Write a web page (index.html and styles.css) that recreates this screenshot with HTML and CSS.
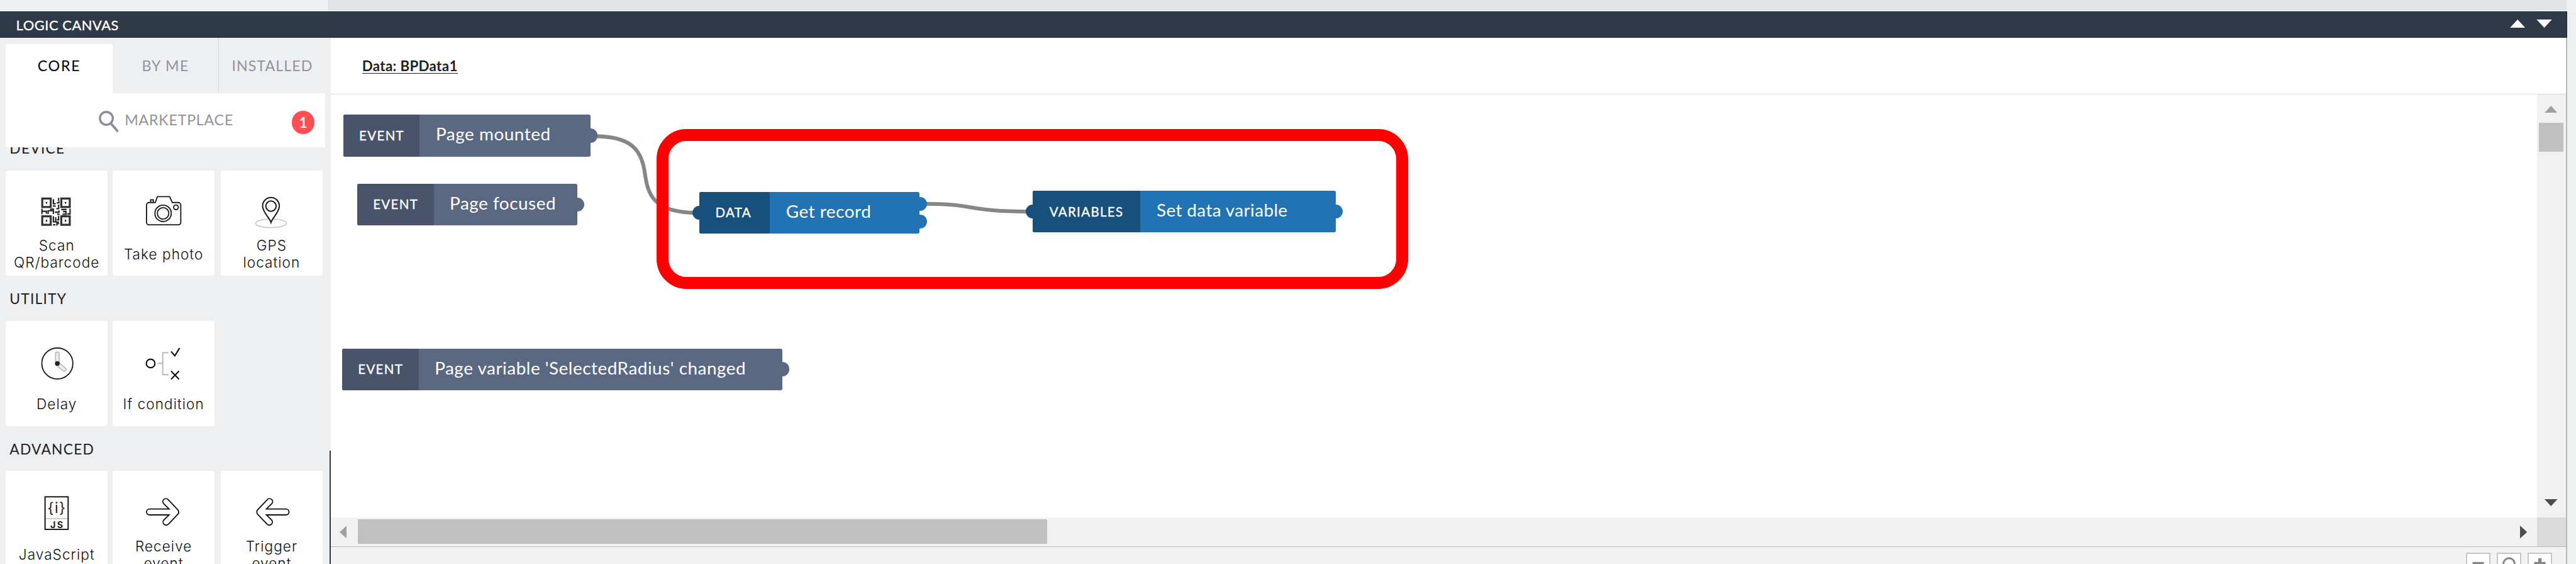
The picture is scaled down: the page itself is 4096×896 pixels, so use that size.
FILE: index.html
```
<!DOCTYPE html>
<html lang="en">
<head>
<meta charset="utf-8">
<title>Logic canvas</title>
<link rel="stylesheet" href="styles.css">
</head>
<body>
<div class="topstrip"><div class="topstrip-left"></div><div class="topstrip-main"></div></div>
<div class="workspace">
  <header class="titlebar">
    <span class="titlebar-name">LOGIC CANVAS</span>
    <svg class="titlebar-arrows" viewBox="0 0 74 15"><path d="M13.3 0 26.6 14.5H0zM47 0h27L60.5 14.5z" fill="#fff"/></svg>
  </header>
  <div class="panes">
    <aside class="sidebar">
      <nav class="tabs">
        <div class="tab tab-active">CORE</div>
        <div class="tab tab-byme">BY ME</div>
        <div class="tab tab-installed">INSTALLED</div>
      </nav>
      <div class="market">
        <svg class="market-icon" viewBox="0 0 34 40" fill="none" stroke="#8a8f96"><circle cx="13" cy="15" r="11" stroke-width="3.6"/><path d="M20.5 23.5 32 36.500" stroke-width="4.2" stroke-linecap="round"/></svg>
        <span class="market-label">MARKETPLACE</span>
        <span class="badge">1</span>
      </div>
      <div class="library">
        <h2 class="group">DEVICE</h2>
        <div class="cards">
          <div class="card">
            <svg class="icon" viewBox="0 0 174 113" fill="none" stroke="#333">
              <g stroke-width="3.4"><path d="M62.500 47.700h14.500v14.500H62.500zM95 47.700h14.500v14.500H95zM62.500 78h14.500v14.500H62.500zM95 78h14.500v14.500H95z"/></g>
              <g fill="#222" stroke="none"><path d="M68.500 53.500h2.500v3h-2.500zM101 53.500h2.500v3H101zM68.500 84h2.500v3h-2.500zM101 84h2.500v3H101z"/></g>
              <path stroke-width="2.300" stroke="#222" d="M81.500 49v7.500h4M90.500 46.500v5M87 55h4v-3M80.500 60.500h5M90.500 58v7h-4M62 65v9.500M62 69.500h7.500v4M72.500 74v-5.500h9V74M76 66h7M84 71h7v-3M88 74.500h4M95 66.500h9M98 70h5v4.500h-6M110 65v9h-5M81.500 78v9.500h4v-8M90.500 77v7h-3M91 88h-5M81 92.500h4M87.500 94v-3.500h4"/>
            </svg>
            <div class="label">Scan<br>QR/barcode</div>
          </div>
          <div class="card">
            <svg class="icon" viewBox="0 0 174 113" fill="none" stroke="#1c1c1c" stroke-width="2">
              <path d="M73 54.500 76.500 44.500H97.500L102 54.500H112a4.500 4.500 0 0 1 4.500 4.500V88.500a4 4 0 0 1-4 4H62a4 4 0 0 1-4-4V59a4.500 4.500 0 0 1 4.500-4.500z"/>
              <path d="M65 54v-4h4.500v4"/><circle cx="86.300" cy="73" r="14"/><circle cx="86.300" cy="73" r="9.800"/><circle cx="108.300" cy="62.700" r="4"/>
            </svg>
            <div class="label">Take photo</div>
          </div>
          <div class="card">
            <svg class="icon" viewBox="0 0 174 113" fill="none" stroke="#1c1c1c" stroke-width="2.200">
              <ellipse cx="86" cy="90" rx="26.500" ry="7.400" stroke="#c8cbd0" stroke-width="1.800"/>
              <path fill="#fff" d="M85.800 88.500C83 80 71.500 71 71.500 60.500a14.300 14.500 0 0 1 28.600 0C100.100 71 88.600 80 85.800 88.500z"/><circle cx="85.800" cy="60.700" r="8.800"/>
            </svg>
            <div class="label">GPS<br>location</div>
          </div>
        </div>
        <h2 class="group">UTILITY</h2>
        <div class="cards">
          <div class="card">
            <svg class="icon" viewBox="0 0 174 113" fill="none">
              <circle cx="88.300" cy="72.400" r="26.500" stroke="#1c1c1c" stroke-width="2"/>
              <g stroke="#b9bcc1" stroke-width="2" fill="#eeeff1"><path d="M85.200 72V56a3.100 3.100 0 0 1 6.200 0V72z"/><path d="M86.500 75.500 98.500 85a2.800 2.800 0 0 0 3.600-4.500L90.300 70.500z"/></g>
              <circle cx="88.300" cy="72.400" r="4" fill="#222"/>
            </svg>
            <div class="label">Delay</div>
          </div>
          <div class="card">
            <svg class="icon" viewBox="0 0 174 113" fill="none" stroke="#111" stroke-width="2.300">
              <circle cx="65" cy="72.400" r="7.300"/>
              <path stroke="#b9bcc1" d="M76.700 72.400h9M95.500 54h-9.800V91.500h9.800"/>
              <path d="M100 52 106.300 59.400 114.500 46M100 85.500 113.500 99.400M113.500 85.500 100 99.400"/>
            </svg>
            <div class="label">If condition</div>
          </div>
        </div>
        <h2 class="group">ADVANCED</h2>
        <div class="cards">
          <div class="card">
            <svg class="icon" viewBox="0 0 174 113" fill="none">
              <path d="M68 81.500h38" stroke="#c4c7cb" stroke-width="2"/>
              <path d="M67.300 44.400H106.700V100H67.300z" stroke="#1c1c1c" stroke-width="2.200"/>
              <text class="icon-code" x="87.500" y="71.500" text-anchor="middle">{i}</text>
              <text class="icon-js" x="88.500" y="97.300" text-anchor="middle">JS</text>
            </svg>
            <div class="label">JavaScript</div>
          </div>
          <div class="card">
            <svg class="icon" viewBox="0 0 174 113" fill="none" stroke="#111" stroke-width="2">
              <path d="M63 65.200H96.500L87.300 56a5 5 0 0 1 7.500-7L111.500 66.500Q114.500 70.300 111.500 74L95.500 90.800A5 5 0 0 1 87.500 84L96.500 75.200H63A5 5 0 0 1 63 65.200z"/>
            </svg>
            <div class="label">Receive<br>event</div>
          </div>
          <div class="card">
            <svg class="icon" viewBox="0 0 174 113" fill="none" stroke="#111" stroke-width="2">
              <path transform="matrix(-1 0 0 1 174.500 0)" d="M63 65.200H96.500L87.300 56a5 5 0 0 1 7.500-7L111.500 66.500Q114.500 70.300 111.500 74L95.500 90.800A5 5 0 0 1 87.500 84L96.500 75.200H63A5 5 0 0 1 63 65.200z"/>
            </svg>
            <div class="label">Trigger<br>event</div>
          </div>
        </div>
      </div>
      <div class="resize-line"></div>
    </aside>
    <main class="main">
      <div class="crumb"><span class="crumb-text">Data: BPData1</span></div>
      <div class="view">
        <div class="canvas">
          <svg class="links" viewBox="565 161 3768 722" fill="none" stroke="#868686" stroke-width="6.500">
            <path d="M1015 232.300C1078 232.300 1095 256 1100.500 290S1108 363 1190 363"/>
            <path d="M1580 347.700C1668 347.700 1650 361 1760 361"/>
          </svg>
          <div class="node event n-mounted"><i class="port out"></i><span class="kind">EVENT</span><span class="name">Page mounted</span></div>
          <div class="node event n-focused"><i class="port out"></i><span class="kind">EVENT</span><span class="name">Page focused</span></div>
          <div class="node event n-radius"><i class="port out"></i><span class="kind">EVENT</span><span class="name">Page variable 'SelectedRadius' changed</span></div>
          <div class="node action n-get"><i class="port in"></i><i class="port out out-a"></i><i class="port out out-b"></i><span class="kind">DATA</span><span class="name">Get record</span></div>
          <div class="node action n-set"><i class="port in"></i><i class="port out"></i><span class="kind">VARIABLES</span><span class="name">Set data variable</span></div>
          <div class="highlight"></div>
        </div>
        <div class="vscroll">
          <svg class="tri-v" viewBox="0 0 22 12"><path d="M11 0 22 12H0z" fill="#a0a0a0"/></svg>
          <div class="vthumb"></div>
          <svg class="tri-v tri-end" viewBox="0 0 22 12"><path d="M0 0H22L11 12z" fill="#4d4d4d"/></svg>
        </div>
        <div class="hscroll">
          <svg class="tri-h" viewBox="0 0 12 22"><path d="M12 0V22L0 11z" fill="#a0a0a0"/></svg>
          <div class="hthumb"></div>
          <svg class="tri-h tri-end" viewBox="0 0 12 22"><path d="M0 0V22L12 11z" fill="#4d4d4d"/></svg>
        </div>
        <div class="corner"></div>
      </div>
      <footer class="zoombar">
        <div class="zbtn"><svg viewBox="0 0 41 41"><path d="M10 15h21v6H10z" fill="#858585"/></svg></div>
        <div class="zbtn"><svg viewBox="0 0 41 41"><circle cx="20.500" cy="18.500" r="10.500" fill="none" stroke="#858585" stroke-width="3.500"/></svg></div>
        <div class="zbtn"><svg viewBox="0 0 41 41"><path d="M10 15h7.500V8h6v7H31v6h-7.500v8h-6v-8H10z" fill="#858585"/></svg></div>
      </footer>
    </main>
  </div>
</div>
</body>
</html>
```
FILE: styles.css
```
/* 1rem is 100 design units */
html { font-size: 93.0909px; }
* { box-sizing: border-box; }
body {
  margin: 0; width: 44rem; height: 9.63rem; overflow: hidden;
  background: #eeeff1; font-family: Lato, "Open Sans", sans-serif; color: #222;
  display: flex; flex-direction: column;
}
svg { display: block; }
.topstrip { display: flex; height: .193rem; flex: none; border-bottom: .02rem solid #f4f5f6; }
.topstrip-left { width: 5.62rem; border-right: .015rem solid #d6d8db; }
.topstrip-main { width: 38.22rem; background: #e3e4e8; }

.workspace { width: 43.845rem; flex: 1; min-height: 0; display: flex; flex-direction: column; }
.titlebar {
  height: .457rem; flex: none; background: #303948;
  border: solid #232d3b; border-width: .015rem .01rem .015rem 0;
  display: flex; align-items: center; justify-content: space-between;
  padding: 0 .235rem 0 .275rem;
}
.titlebar-name { color: #fff; font-size: .235rem; letter-spacing: .006rem; -webkit-text-stroke: .004rem #fff; }
.titlebar-arrows { width: .74rem; height: .145rem; margin-bottom: .03rem; }
.panes { flex: 1; min-height: 0; display: flex; }

.sidebar { position: relative; width: 5.65rem; flex: none; background: #eeeff1; display: flex; flex-direction: column; }
.tabs { display: flex; height: .94rem; flex: none; padding-left: .1rem; }
.tab {
  display: flex; align-items: center; justify-content: center; padding-bottom: .01rem;
  font-size: .25rem; letter-spacing: .013rem; color: #90949b;
}
.tab-active { width: 1.82rem; margin-top: .1rem; padding-bottom: .11rem; background: #fff; color: #000; border-radius: .03rem .03rem 0 0; letter-spacing: .018rem; }
.tab-byme { width: 1.81rem; }
.tab-installed { width: 1.83rem; border-left: .015rem solid #d5d7da; letter-spacing: .011rem; }
.market {
  width: 5.45rem; height: .92rem; flex: none; margin-left: .1rem; background: #fff;
  display: flex; align-items: center; padding-left: 1.584rem;
}
.market-icon { width: .34rem; height: .4rem; margin-top: .04rem; }
.market-label { margin-left: .105rem; padding-bottom: .01rem; font-size: .25rem; letter-spacing: .008rem; color: #90949b; }
.badge {
  width: .395rem; height: .395rem; margin: .08rem 0 0 auto; margin-right: .175rem; border-radius: 50%;
  background: #ff4f52; color: #fff; font-size: .24rem; font-weight: 700;
  display: flex; align-items: center; justify-content: center;
}
.library { flex: 1; min-height: 0; overflow: hidden; padding-left: .1rem; }
.group {
  margin: 0; height: .77rem; padding: .25rem 0 0 .065rem;
  font-size: .245rem; line-height: .3rem; font-weight: 400; letter-spacing: .013rem;
}
.group:first-child { margin-top: -.37rem; }
.cards { display: grid; grid-template-columns: 1.825rem 1.845rem 1.745rem; }
.card { width: 1.74rem; height: 1.795rem; background: #fff; border-radius: .04rem; }
.icon { width: 1.74rem; height: 1.13rem; overflow: visible; }
.icon-code { font: 400 25px Inter, sans-serif; letter-spacing: 1.5px; fill: #222; }
.icon-js { font: 700 15.500px Inter, sans-serif; letter-spacing: 2.500px; fill: #222; }
.label {
  height: .586rem; display: flex; align-items: center; justify-content: center; text-align: center;
  font: 300 .243rem/.293rem Inter, sans-serif; letter-spacing: .011rem; color: #111;
}
.resize-line { position: absolute; right: 0; top: 7.04rem; bottom: 0; width: .02rem; background: #303948; }

.main { flex: 1; min-width: 0; background: #fff; border-right: .022rem solid #b8bab9; display: flex; flex-direction: column; }
.crumb { height: .96rem; flex: none; border-bottom: .02rem solid #dcdee4; padding: .34rem 0 0 .535rem; }
.crumb-text {
  display: inline-block; height: .262rem; line-height: .27rem; border-bottom: .02rem solid #222;
  font-size: .24rem; font-weight: 700; letter-spacing: .0035rem; white-space: nowrap; vertical-align: top;
}
.view { display: grid; grid-template-columns: 37.68rem 1fr; grid-template-rows: 7.22rem .49rem; flex: none; }
.canvas { position: relative; overflow: hidden; }
.links { position: absolute; left: 0; top: 0; width: 37.68rem; height: 7.22rem; }
.vscroll { background: #f1f1f1; display: flex; flex-direction: column; align-items: center; padding: .193rem 0; }
.tri-v { width: .22rem; height: .12rem; flex: none; }
.vthumb { width: .415rem; height: .49rem; margin-top: .175rem; background: #c0c0c0; }
.tri-end { margin-top: auto; }
.hscroll { background: #f1f1f1; display: flex; align-items: center; padding: 0 .17rem 0 .15rem; }
.tri-h { width: .12rem; height: .22rem; flex: none; margin: 0; }
.hthumb { width: 11.77rem; height: .415rem; margin-left: .195rem; background: #c0c0c0; }
.tri-h.tri-end { margin-left: auto; }
.corner { background: #dadada; }
.zoombar {
  flex: 1; min-height: 0; overflow: hidden; background: #f2f2f2; border-top: .02rem solid #b8bab9;
  display: flex; justify-content: flex-end; gap: .105rem; padding: .1rem .235rem 0 0;
}
.zbtn { width: .42rem; height: .41rem; flex: none; background: #fff; border: .022rem solid #c6c6c6; }
.zbtn svg { width: 100%; }

.node { position: absolute; display: flex; height: .71rem; border-radius: .03rem; color: #fff; white-space: nowrap; }
.kind {
  position: relative; display: flex; align-items: center; padding-bottom: .01rem; border-radius: .03rem;
  font-size: .22rem; letter-spacing: .0145rem; -webkit-text-stroke: .004rem #fff;
}
.name { position: relative; display: flex; align-items: center; padding: 0 0 .065rem .275rem; font-size: .3rem; letter-spacing: .0055rem; }
.event, .event .port { background: #5a6881; }
.event .kind { width: 1.31rem; padding-left: .275rem; background: #49546a; }
.action, .action .port { background: #2273b3; }
.action .kind, .action .in { background: #18507c; }
.port { position: absolute; width: .24rem; height: .24rem; border-radius: 50%; top: .235rem; }
.out { right: -.12rem; }
.in { left: -.12rem; }
.n-mounted { left: .21rem; top: .35rem; width: 4.23rem; }
.n-focused { left: .447rem; top: 1.525rem; width: 3.76rem; }
.n-radius { left: .19rem; top: 4.337rem; width: 7.52rem; }
.n-get { left: 6.3rem; top: 1.665rem; width: 3.76rem; }
.n-get .kind { width: 1.2rem; padding-left: .27rem; }
.n-get .out-a { top: .085rem; }
.n-get .out-b { top: .39rem; }
.n-set { left: 11.99rem; top: 1.645rem; width: 5.18rem; }
.n-set .kind { width: 1.84rem; padding-left: .285rem; }
.n-set .name { letter-spacing: .004rem; }
.highlight { position: absolute; left: 5.57rem; top: .59rem; width: 12.83rem; height: 2.73rem; border: .21rem solid #f00; border-radius: .51rem; }
```
